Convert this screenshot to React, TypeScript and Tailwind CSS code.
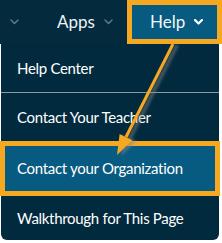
import React from 'react';

function Chevron({ color, bold }: { color: string; bold?: boolean }) {
  return (
    <svg width="9" height="6" viewBox="0 0 9 6" className="shrink-0">
      <polyline
        points="1,1 4.5,4.5 8,1"
        fill="none"
        stroke={color}
        strokeWidth={bold ? 2.2 : 1.6}
        strokeLinecap="round"
        strokeLinejoin="round"
      />
    </svg>
  );
}

const items = ['Help Center', 'Contact Your Teacher', 'Contact your Organization', 'Walkthrough for This Page'];

export default function App() {
  return (
    <div
      className="relative w-[222px] h-[243px] bg-white overflow-hidden"
      style={{ fontFamily: 'Lato, "Open Sans", sans-serif' }}
    >
      {/* top nav */}
      <div className="flex items-center h-[44px] bg-[#032a3d]">
        <div className="ml-[10px]">
          <Chevron color="#5f7482" />
        </div>
        <span className="ml-[38px] text-[17px] text-[#eef3f6]">Apps</span>
        <div className="ml-[9px]">
          <Chevron color="#5f7482" />
        </div>
        <div className="ml-auto flex items-center h-full w-[95px] border-[5px] border-[#f6a821] bg-[#075a80] pl-[18px] gap-[9px]">
          <span className="text-[17px] text-[#f2f6f8]">Help</span>
          <Chevron color="#ffffff" bold />
        </div>
      </div>

      {/* dropdown */}
      <div className="ml-px w-[218px] h-[196px] bg-[#022a3e] rounded-b-md flex flex-col text-[15px] tracking-[-0.3px] text-white">
        <div className="h-[48px] flex items-center pl-4">{items[0]}</div>
        <div className="h-px bg-[#8a99a3]" />
        <div className="h-[48px] flex items-center pl-4">{items[1]}</div>
        <div className="-mx-px h-[55px] flex items-center border-[5px] border-[#f6a821] bg-[#075a80] pl-[12px]">
          {items[2]}
        </div>
        <div className="flex-1 flex items-center pl-4">{items[3]}</div>
      </div>

      {/* arrow overlay */}
      <svg className="absolute top-0 left-0 pointer-events-none" width="222" height="243" viewBox="0 0 222 243">
        <defs>
          <filter id="blur" x="-50%" y="-50%" width="200%" height="200%">
            <feGaussianBlur stdDeviation="1.5" />
          </filter>
        </defs>
        <g filter="url(#blur)" opacity="0.55" transform="translate(4,1)">
          <line x1="173" y1="44" x2="126" y2="137" stroke="#8a8a8a" strokeWidth="3.5" />
          <polygon points="117,155 132.2,140.2 119.6,134" fill="#8a8a8a" />
        </g>
        <line x1="173" y1="44" x2="126" y2="137" stroke="#f6a821" strokeWidth="3" />
        <polygon points="117,155 132.2,140.2 119.6,134" fill="#f6a821" />
      </svg>
    </div>
  );
}
